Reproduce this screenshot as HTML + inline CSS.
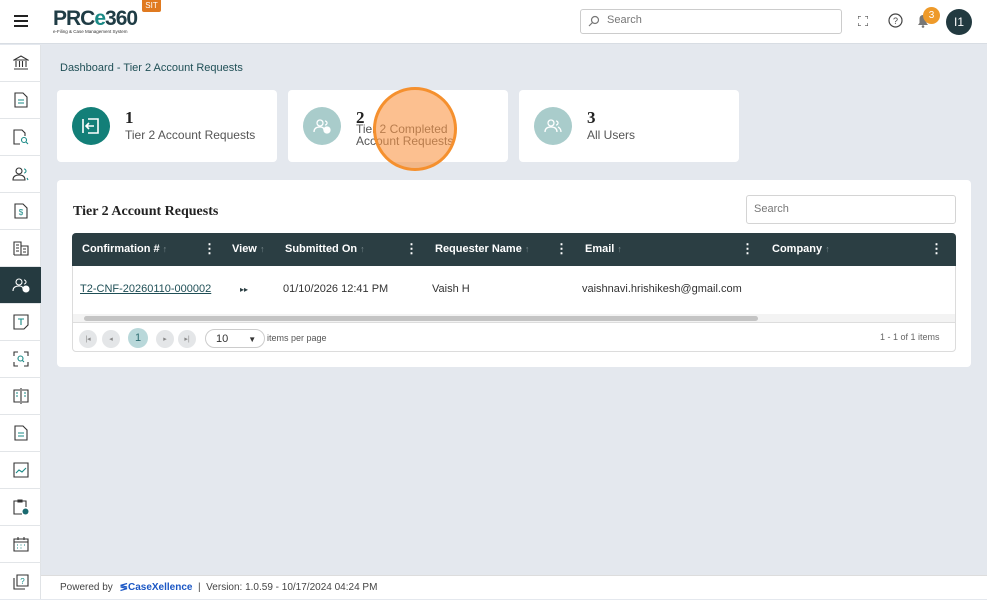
<!DOCTYPE html>
<html><head><meta charset="utf-8"><style>
*{box-sizing:border-box;margin:0;padding:0}
body{width:987px;height:599px;overflow:hidden;background:#e4e8ee;font-family:"Liberation Sans",sans-serif;position:relative;color:#333}
.a{position:absolute}
.hdr{left:0;top:0;width:987px;height:44px;background:#fff;border-bottom:1px solid #d8dde3}
.side{left:0;top:45px;width:41px;height:554px;background:#fff;border-right:1px solid #e0e3e6}
.si{position:absolute;left:0;width:41px;height:37px;border-bottom:1px solid #e2e5e8;display:flex;align-items:center;justify-content:center}
.card{background:#fff;border-radius:4px;top:90px;height:72px;width:220px}
.circ{position:absolute;left:15px;top:17px;width:38px;height:38px;border-radius:50%;display:flex;align-items:center;justify-content:center}
.num{position:absolute;left:68px;top:18px;font-family:"Liberation Serif",serif;font-weight:bold;font-size:17px;color:#222}
.lbl{position:absolute;left:68px;font-size:12px;color:#555;line-height:12px}
.th{color:#fff;font-size:11px;font-weight:bold;top:243px}
.dot{color:#fff;font-size:13px;font-weight:bold;top:241px}
.ar{color:#7a8a8e;font-weight:normal;font-size:9px}
.td{font-size:11px;color:#333;top:283px}
.pb{top:330px;width:18px;height:18px;border-radius:50%;background:#e4e6e8;font-size:7px;color:#888;display:flex;align-items:center;justify-content:center}
</style></head><body>
<div class="a hdr"></div>
<div class="a" style="left:14px;top:15px;width:14px;height:2px;background:#222;box-shadow:0 5px 0 #222,0 10px 0 #222"></div>
<div class="a" style="left:53px;top:7px;font-size:21px;font-weight:bold;color:#1f3c45;letter-spacing:-1px">PRC<span style="color:#1a8a86">e</span>36<span style="color:#1f3c45">0</span></div>
<div class="a" style="left:53px;top:29px;font-size:4.5px;color:#333">e-Filing &amp; Case Management System</div>
<div class="a" style="left:142px;top:0;width:19px;height:12px;background:#e07a20;color:#fff;font-size:8px;text-align:center;line-height:12px;border-radius:0 0 2px 2px">SIT</div>
<div class="a" style="left:580px;top:9px;width:262px;height:25px;border:1px solid #ccc;border-radius:3px"></div>
<svg class="a" style="left:588px;top:15px" width="12" height="12" viewBox="0 0 12 12"><circle cx="7" cy="5" r="3.5" fill="none" stroke="#777" stroke-width="1.2"/><path d="M4.5 7.5L1 11" stroke="#777" stroke-width="1.2"/></svg>
<div class="a" style="left:607px;top:14px;font-size:11px;color:#777">Search</div>
<svg class="a" style="left:858px;top:16px" width="10" height="10" viewBox="0 0 10 10" fill="none" stroke="#555" stroke-width="1.2"><path d="M0 3V0H3M7 0H10V3M10 7V10H7M3 10H0V7"/></svg>
<svg class="a" style="left:888px;top:13px" width="15" height="15" viewBox="0 0 15 15"><circle cx="7.5" cy="7.5" r="6.5" fill="none" stroke="#444" stroke-width="1.2"/><text x="7.5" y="11" font-size="9" text-anchor="middle" fill="#444" font-family="Liberation Sans">?</text></svg>
<svg class="a" style="left:917px;top:14px" width="12" height="14" viewBox="0 0 12 14"><path d="M6 1C3.5 1 2.5 3 2.5 5V9L1 11H11L9.5 9V5C9.5 3 8.5 1 6 1Z" fill="#777"/><circle cx="6" cy="12.5" r="1.3" fill="#777"/></svg>
<div class="a" style="left:923px;top:7px;width:17px;height:17px;border-radius:50%;background:#ee9a2a;color:#fff;font-size:10px;text-align:center;line-height:17px">3</div>
<div class="a" style="left:946px;top:9px;width:26px;height:26px;border-radius:50%;background:#223a40;color:#fff;font-size:12px;text-align:center;line-height:26px">I1</div>

<div class="a side">
<div class="si" style="top:0"><svg width="16" height="16" viewBox="0 0 16 16" fill="none" stroke="#333" stroke-width="1.1"><path d="M1 5L8 1L15 5ZM3 6V12M6.5 6V12M9.5 6V12M13 6V12M1 14H15"/></svg></div>
<div class="si" style="top:37px"><svg width="14" height="16" viewBox="0 0 14 16" fill="none" stroke="#333" stroke-width="1.1"><path d="M1 1H9L13 5V15H1Z"/><path d="M4 8H10M4 11H10" stroke="#1a8a86"/></svg></div>
<div class="si" style="top:74px"><svg width="16" height="16" viewBox="0 0 16 16" fill="none" stroke="#333" stroke-width="1.1"><path d="M7 15H1V1H9L12 4V7"/><circle cx="11" cy="11" r="2.5" stroke="#1a8a86"/><path d="M13 13L15 15" stroke="#1a8a86"/></svg></div>
<div class="si" style="top:111px"><svg width="18" height="16" viewBox="0 0 18 16" fill="none" stroke="#333" stroke-width="1.1"><circle cx="7" cy="5" r="3"/><path d="M1 14C1 10 4 9 7 9S13 10 13 14Z"/><path d="M12 3A2 2 0 0 1 12 7M15 12L16 14" stroke="#1a8a86"/></svg></div>
<div class="si" style="top:148px"><svg width="14" height="16" viewBox="0 0 14 16" fill="none" stroke="#333" stroke-width="1.1"><path d="M1 1H9L13 5V15H1Z"/><text x="7" y="12" font-size="8" text-anchor="middle" fill="#1a8a86" stroke="none">$</text></svg></div>
<div class="si" style="top:185px"><svg width="16" height="16" viewBox="0 0 16 16" fill="none" stroke="#333" stroke-width="1.1"><path d="M1 15V2H8V15M8 6H15V15H1M3 5H6M3 8H6M3 11H6M10 9H13M10 12H13"/></svg></div>
<div class="si" style="top:222px;background:#253a40"><svg width="18" height="16" viewBox="0 0 18 16" fill="none" stroke="#fff" stroke-width="1.1"><circle cx="7" cy="5" r="3"/><path d="M1 14C1 10 4 9 7 9S11 10 11 12"/><circle cx="14" cy="12" r="3" fill="#fff"/><path d="M12 3A2 2 0 0 1 12 7"/></svg></div>
<div class="si" style="top:259px"><svg width="16" height="16" viewBox="0 0 16 16" fill="none" stroke="#333" stroke-width="1.1"><path d="M1 1H15V11L11 15H1Z"/><path d="M5 5H11M8 5V11" stroke="#1a8a86"/></svg></div>
<div class="si" style="top:296px"><svg width="16" height="16" viewBox="0 0 16 16" fill="none" stroke="#333" stroke-width="1.1"><path d="M1 5V1H5M11 1H15V5M15 11V15H11M5 15H1V11"/><circle cx="7.5" cy="7.5" r="2.5" stroke="#1a8a86"/><path d="M9.5 9.5L11 11" stroke="#1a8a86"/></svg></div>
<div class="si" style="top:333px"><svg width="16" height="16" viewBox="0 0 16 16" fill="none" stroke="#333" stroke-width="1.1"><path d="M7 2H1V14H7M9 2H15V14H9M8 0V16"/><path d="M3 5H5M3 8H5M11 5H13M11 8H13" stroke="#1a8a86"/></svg></div>
<div class="si" style="top:370px"><svg width="14" height="16" viewBox="0 0 14 16" fill="none" stroke="#333" stroke-width="1.1"><path d="M1 1H9L13 5V15H1Z"/><path d="M4 8H10M4 11H10" stroke="#1a8a86"/></svg></div>
<div class="si" style="top:407px"><svg width="16" height="16" viewBox="0 0 16 16" fill="none" stroke="#333" stroke-width="1.1"><path d="M1 1H15V15H1Z"/><path d="M3 11L6 8L9 10L13 6" stroke="#1a8a86"/></svg></div>
<div class="si" style="top:444px"><svg width="16" height="16" viewBox="0 0 16 16" fill="none" stroke="#333" stroke-width="1.1"><path d="M9 15H1V2H13V8M5 1H9V3H5Z"/><circle cx="12.5" cy="12.5" r="3" fill="#1a6a70" stroke="none"/></svg></div>
<div class="si" style="top:481px"><svg width="16" height="16" viewBox="0 0 16 16" fill="none" stroke="#333" stroke-width="1.1"><path d="M1 3H15V15H1ZM1 6H15M5 1V4M11 1V4"/><path d="M4 9H5M7.5 9H8.5M11 9H12M4 12H5M7.5 12H8.5" stroke="#1a8a86"/></svg></div>
<div class="si" style="top:518px;border:none"><svg width="16" height="16" viewBox="0 0 16 16" fill="none" stroke="#333" stroke-width="1.1"><path d="M4 1H15V12H4ZM1 4V15H12"/><text x="9.5" y="10" font-size="8" text-anchor="middle" fill="#1a8a86" stroke="none">?</text></svg></div>
</div>

<div class="a" style="left:60px;top:62px;font-size:11px;color:#1f4f56">Dashboard - Tier 2 Account Requests</div>

<div class="a card" style="left:57px"><div class="circ" style="background:#137f78"><svg width="18" height="16" viewBox="0 0 18 16" fill="none" stroke="#fff" stroke-width="1.6"><path d="M6 1H16V15H6M1 1V15"/><path d="M12 8H4M7 5L4 8L7 11"/></svg></div><div class="num">1</div><div class="lbl" style="top:39px">Tier 2 Account Requests</div></div>
<div class="a card" style="left:288px"><div class="circ" style="background:#a9cccb"><svg width="18" height="16" viewBox="0 0 18 16" fill="none" stroke="#fff" stroke-width="1.3"><circle cx="7" cy="5" r="3"/><path d="M1 14C1 10 4 9 7 9S11 10 11 12M12 3A2 2 0 0 1 12 7"/><circle cx="14" cy="12" r="3" fill="#fff"/></svg></div><div class="num">2</div><div class="lbl" style="top:33px">Tier 2 Completed<br>Account Requests</div></div>
<div class="a card" style="left:519px"><div class="circ" style="background:#a9cccb"><svg width="18" height="16" viewBox="0 0 18 16" fill="none" stroke="#fff" stroke-width="1.3"><circle cx="7" cy="5" r="3"/><path d="M1 14C1 10 4 9 7 9S13 10 13 14M12 3A2 2 0 0 1 12 7M14 9C16 10 17 12 17 14"/></svg></div><div class="num">3</div><div class="lbl" style="top:39px">All Users</div></div>
<div class="a" style="left:373px;top:87px;width:84px;height:84px;border-radius:50%;background:rgba(250,150,70,0.6);border:3px solid #f5902e"></div>

<div class="a" style="left:57px;top:180px;width:914px;height:187px;background:#fff;border-radius:4px"></div>
<div class="a" style="left:73px;top:204px;font-family:'Liberation Serif',serif;font-weight:bold;font-size:14px;color:#222">Tier 2 Account Requests</div>
<div class="a" style="left:746px;top:195px;width:210px;height:29px;border:1px solid #d4d4d4;border-radius:3px;font-size:11px;color:#777;padding:7px 0 0 7px">Search</div>
<div class="a" style="left:72px;top:233px;width:884px;height:119px;border:1px solid #dcdcdc;border-radius:4px"></div>
<div class="a" style="left:72px;top:233px;width:884px;height:33px;background:#2b3e43;border-radius:4px 4px 0 0"></div>
<div class="a th" style="left:82px">Confirmation # <span class="ar">↑</span></div>
<div class="a dot" style="left:203px">⋮</div>
<div class="a th" style="left:232px">View <span class="ar">↑</span></div>
<div class="a th" style="left:285px">Submitted On <span class="ar">↑</span></div>
<div class="a dot" style="left:405px">⋮</div>
<div class="a th" style="left:435px">Requester Name <span class="ar">↑</span></div>
<div class="a dot" style="left:555px">⋮</div>
<div class="a th" style="left:585px">Email <span class="ar">↑</span></div>
<div class="a dot" style="left:741px">⋮</div>
<div class="a th" style="left:772px">Company <span class="ar">↑</span></div>
<div class="a dot" style="left:930px">⋮</div>
<div class="a td" style="left:80px;color:#1f4f56;text-decoration:underline">T2-CNF-20260110-000002</div>
<div class="a td" style="left:240px;font-size:8px;top:285px;color:#2b3e43">▸▸</div>
<div class="a td" style="left:283px">01/10/2026 12:41 PM</div>
<div class="a td" style="left:432px">Vaish H</div>
<div class="a td" style="left:582px">vaishnavi.hrishikesh@gmail.com</div>
<div class="a" style="left:73px;top:314px;width:882px;height:9px;background:#f3f3f3;border-bottom:1px solid #ddd"></div>
<div class="a" style="left:84px;top:316px;width:674px;height:5px;background:#c4c4c4;border-radius:3px"></div>
<div class="a pb" style="left:79px">|◂</div>
<div class="a pb" style="left:102px">◂</div>
<div class="a" style="left:128px;top:328px;width:20px;height:20px;border-radius:50%;background:#b9d8da;font-size:11px;color:#2b6b70;text-align:center;line-height:20px">1</div>
<div class="a pb" style="left:156px">▸</div>
<div class="a pb" style="left:178px">▸|</div>
<div class="a" style="left:205px;top:329px;width:60px;height:19px;border:1px solid #ccc;border-radius:10px;font-size:11px;padding:3px 0 0 10px">10 <span style="font-size:8px;margin-left:17px">▼</span></div>
<div class="a" style="left:267px;top:333px;font-size:9px;color:#555">items per page</div>
<div class="a" style="left:880px;top:332px;font-size:9px;color:#666">1 - 1 of 1 items</div>

<div class="a" style="left:41px;top:575px;width:946px;height:24px;background:#fff;border-top:1px solid #ddd"></div>
<div class="a" style="left:60px;top:582px;font-size:10px;color:#444">Powered by <b style="color:#1a56c4;margin-left:4px">≶CaseXellence</b> &nbsp;| &nbsp;Version: 1.0.59 - 10/17/2024 04:24 PM</div>
</body></html>
